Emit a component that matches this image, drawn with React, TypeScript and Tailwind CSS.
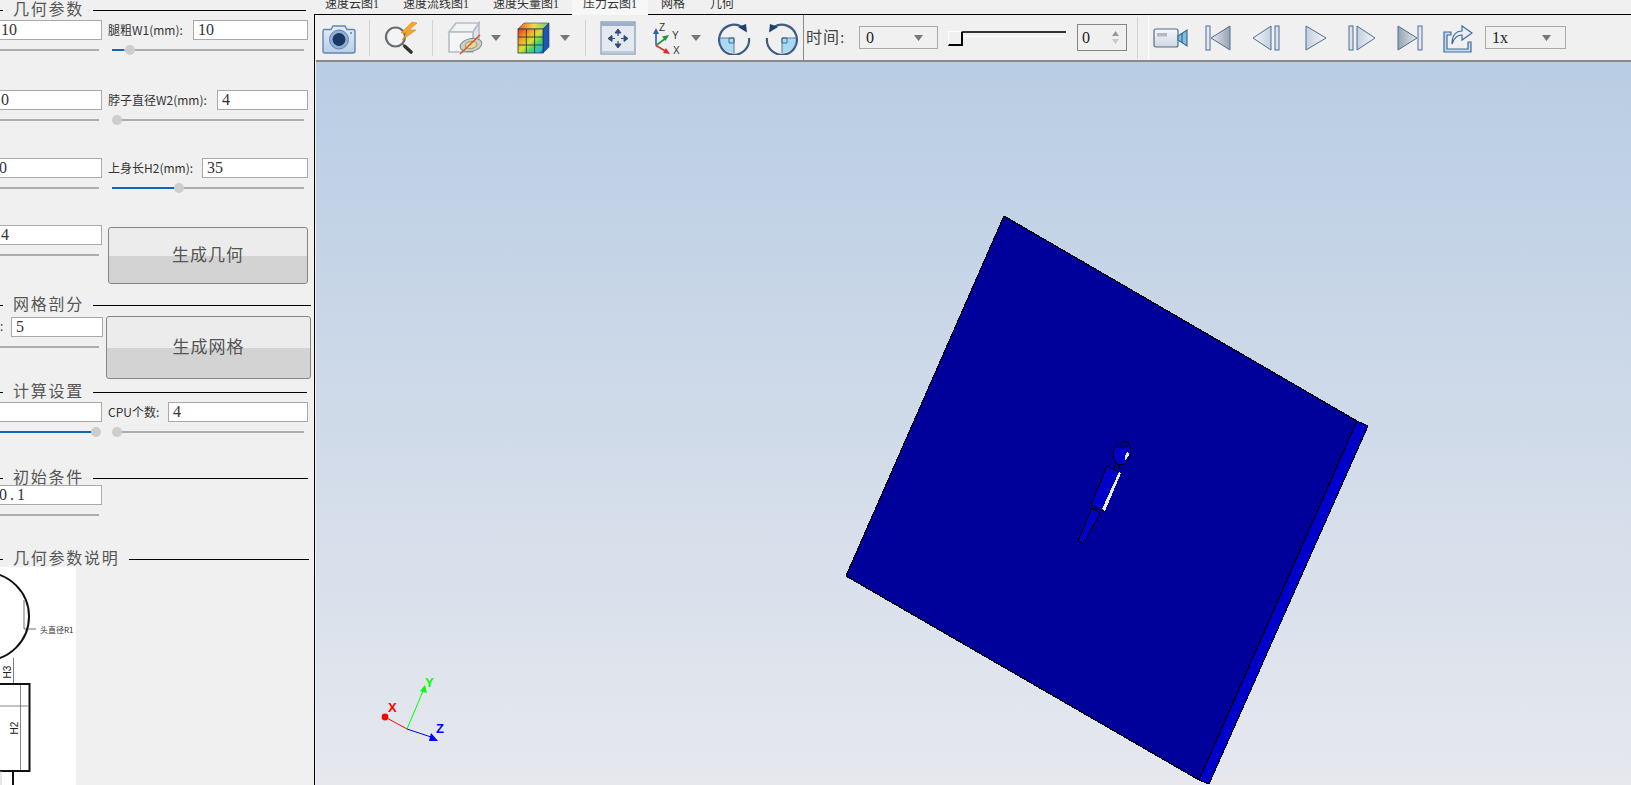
import React from "react";

const serif = "font-['Liberation_Serif','Noto_Sans_CJK_SC',serif]";
const sans = "font-['Noto_Sans_CJK_SC','Liberation_Sans',sans-serif]";

function Heading({ text, className }: { text: string; className: string }) {
  return (
    <div className={`flex items-center ${className}`}>
      <div className="w-[3px] h-px bg-black shrink-0" />
      <span className={`ml-[10px] mr-[9px] shrink-0 text-[16px] leading-none tracking-[1.75px] text-[#555] ${serif}`}>{text}</span>
      <div className="flex-1 h-px bg-black" />
    </div>
  );
}

function Value({ value, className = "" }: { value: string; className?: string }) {
  return (
    <input
      readOnly
      value={value}
      className={`block h-5 min-w-0 border border-[#a9a9a9] bg-white text-[16px] leading-none text-[#333] outline-none ${serif} ${className}`}
    />
  );
}

function Track({ fill = "", thumb = "", className = "" }: { fill?: string; thumb?: string; className?: string }) {
  return (
    <div className={`relative mt-1 h-3 flex items-center ${className}`}>
      <div className="w-full h-0.5 bg-[#adadad]" />
      {fill && <div className={`absolute left-0 h-0.5 bg-[#0f67b8] ${fill}`} />}
      {thumb && <div className={`absolute top-[1px] w-[10px] h-[10px] rounded-full bg-[#cdcdcd] ${thumb}`} />}
    </div>
  );
}

function LeftCell({ value, pad }: { value: string; pad: string }) {
  return (
    <div className="min-w-0">
      <Value value={value} className={`w-[122px] -ml-5 ${pad}`} />
      <Track className="w-[99px]" />
    </div>
  );
}

function RightCell({ label, labelW, value, fill, thumb }: { label: string; labelW: string; value: string; fill?: string; thumb: string }) {
  return (
    <div>
      <div className="flex items-center">
        <span className={`shrink-0 whitespace-nowrap text-[12px] leading-none text-[#333] ${sans} ${labelW}`}>{label}</span>
        <Value value={value} className="flex-1 w-full pl-[4px]" />
      </div>
      <Track fill={fill} thumb={thumb} className="mx-1" />
    </div>
  );
}

function GenButton({ text, className }: { text: string; className: string }) {
  return (
    <button className={`flex items-center justify-center border border-[#858585] rounded-[3px] bg-linear-to-b from-[#ececec] from-50% to-[#d3d3d3] to-50% text-[17px] tracking-[1px] text-[#555] ${serif} ${className}`}>
      {text}
    </button>
  );
}

function Diagram() {
  return (
    <svg width="76" height="218" viewBox="0 0 76 218" className="block">
      <circle cx="-15" cy="49.5" r="44" fill="none" stroke="#111" strokeWidth="2" />
      <path d="M24 33V62M24 62H36" stroke="#333" strokeWidth="0.7" fill="none" />
      <text x="40" y="66" fontSize="8" fill="#333" fontFamily="Noto Sans CJK SC, sans-serif">头直径R1</text>
      <path d="M13.5 91V117" stroke="#444" strokeWidth="0.7" />
      <text transform="translate(11 105) rotate(-90)" fontSize="10" fill="#222" fontFamily="Liberation Sans, sans-serif" textAnchor="middle">H3</text>
      <rect x="-6" y="117" width="35.5" height="87" fill="none" stroke="#111" strokeWidth="2" />
      <path d="M20.5 118V203M0 139H28" stroke="#555" strokeWidth="0.7" fill="none" />
      <text transform="translate(18 161) rotate(-90)" fontSize="10" fill="#222" fontFamily="Liberation Sans, sans-serif" textAnchor="middle">H2</text>
      <path d="M13 204V218" stroke="#111" strokeWidth="2" />
      <path d="M1 204V218" stroke="#bbb" strokeWidth="0.7" />
    </svg>
  );
}

function LeftPanel() {
  return (
    <div className="w-[314px] shrink-0 h-full overflow-hidden bg-[#f0f0f0]">
      <Heading text="几何参数" className="h-5 pr-2" />
      <div className="grid grid-cols-[102px_200px] gap-x-[6px] h-[70px]">
        <LeftCell value="10" pad="pl-[20px]" />
        <RightCell label="腿粗W1(mm):" labelW="w-[85px]" value="10" fill="w-[12px]" thumb="left-[13px]" />
      </div>
      <div className="grid grid-cols-[102px_200px] gap-x-[6px] h-[68px]">
        <LeftCell value="10" pad="pl-[12px]" />
        <RightCell label="脖子直径W2(mm):" labelW="w-[109px]" value="4" thumb="left-0" />
      </div>
      <div className="grid grid-cols-[102px_200px] gap-x-[6px] h-[67px]">
        <LeftCell value="10" pad="pl-[10px]" />
        <RightCell label="上身长H2(mm):" labelW="w-[94px]" value="35" fill="w-[65px]" thumb="left-[62px]" />
      </div>
      <div className="grid grid-cols-[102px_200px] gap-x-[6px] h-[70px]">
        <LeftCell value="4" pad="pl-[20px]" />
        <GenButton text="生成几何" className="mt-[2px] h-[57px]" />
      </div>
      <Heading text="网格剖分" className="h-5 pr-[3px]" />
      <div className="flex h-[67px]">
        <div className="w-[103px] shrink-0 pt-[2px]">
          <div className="flex items-center">
            <span className="w-[11px] text-[12px] leading-none text-[#333]">:</span>
            <Value value="5" className="w-[92px] pl-[4px]" />
          </div>
          <Track className="w-[99px]" />
        </div>
        <GenButton text="生成网格" className="ml-[3px] mt-[1px] w-[205px] h-[63px]" />
      </div>
      <Heading text="计算设置" className="h-5 pr-[7px]" />
      <div className="grid grid-cols-[102px_200px] gap-x-[6px] h-[66px]">
        <div>
          <Value value="" className="w-[122px] -ml-5" />
          <div className="relative mt-1 h-3 flex items-center w-[99px]">
            <div className="w-full h-0.5 bg-[#0f67b8]" />
            <div className="absolute left-[91px] top-[1px] w-[10px] h-[10px] rounded-full bg-[#cdcdcd]" />
          </div>
        </div>
        <RightCell label="CPU个数:" labelW="w-[60px]" value="4" thumb="left-0" />
      </div>
      <Heading text="初始条件" className="h-[17px] pr-[6px] pt-[3px]" />
      <div className="h-[64px]">
        <Value value="0.1" className="w-[122px] -ml-5 pl-[18px] tracking-[3px]" />
        <Track className="w-[99px]" />
      </div>
      <Heading text="几何参数说明" className="h-[18px] pr-[5px] pt-[2px]" />
      <div className="w-[76px] h-[218px] bg-white overflow-hidden">
        <Diagram />
      </div>
    </div>
  );
}

function Sep({ className = "" }: { className?: string }) {
  return <div className={`w-px h-[36px] bg-[#d4d4d4] shrink-0 ${className}`} />;
}

function Caret({ className = "" }: { className?: string }) {
  return (
    <svg width="12" height="8" viewBox="0 0 12 8" className={`shrink-0 ${className}`}>
      <path d="M1 1H11L6 7Z" fill="#777" />
    </svg>
  );
}

function CameraIcon() {
  return (
    <svg width="34" height="32" viewBox="0 0 34 32" className="shrink-0 ml-[6px]">
      <defs>
        <linearGradient id="cam" x1="0" y1="0" x2="0" y2="1">
          <stop offset="0" stopColor="#e4eef9" />
          <stop offset="1" stopColor="#b6cfe8" />
        </linearGradient>
      </defs>
      <path d="M2 7.5H9L11 4H23L25 7.5H31Q33 7.5 33 9.5V29Q33 31 31 31H3Q1 31 1 29V9.5Q1 7.5 2 7.5Z" fill="url(#cam)" stroke="#6384ae" strokeWidth="1.4" />
      <circle cx="17" cy="17.5" r="9.5" fill="#8fb0d3" stroke="#6384ae" />
      <circle cx="17" cy="17.5" r="6.5" fill="#1a3766" />
      <circle cx="29" cy="11" r="1" fill="#5a7ba6" />
    </svg>
  );
}

function SearchBoltIcon() {
  return (
    <svg width="36" height="34" viewBox="0 0 36 34" className="shrink-0 ml-[14px]">
      <circle cx="11.5" cy="16" r="9.5" fill="#f2f5f8" stroke="#6b6b6b" strokeWidth="2.2" />
      <path d="M18.5 23L21 25.5" stroke="#777" strokeWidth="2" />
      <path d="M21 25.5L27 31" stroke="#333" strokeWidth="3.6" strokeLinecap="round" />
      <path d="M28 1L17 12H23L18 19L32 9H25L33 2Z" fill="#f3a62a" stroke="#d88a18" strokeWidth="0.6" />
    </svg>
  );
}

function BoxSliceIcon() {
  return (
    <svg width="36" height="34" viewBox="0 0 36 34" className="shrink-0 ml-[14px]">
      <path d="M2 11L9 2H32L26 11Z" fill="#f2f3f5" stroke="#b4bcc8" strokeWidth="1.6" />
      <path d="M26 11L32 2V22L26 30Z" fill="#dfe3e9" stroke="#b4bcc8" strokeWidth="1.6" />
      <path d="M2 11H26V31H2Z" fill="#f5f5f6" stroke="#b4bcc8" strokeWidth="1.6" />
      <ellipse cx="24" cy="24" rx="11" ry="6.5" transform="rotate(-12 24 24)" fill="#c9d3c4" stroke="#7a8c98" />
      <ellipse cx="24" cy="24" rx="6" ry="3.5" transform="rotate(-12 24 24)" fill="#e6d79a" stroke="#a79a66" />
      <path d="M13 33L33 14" stroke="#d9522a" strokeWidth="1.4" />
    </svg>
  );
}

function ColorCubeIcon() {
  return (
    <svg width="35" height="34" viewBox="0 0 35 34" className="shrink-0 ml-[14px]">
      <defs>
        <linearGradient id="rainbow" x1="0" y1="0" x2="1" y2="1">
          <stop offset="0" stopColor="#e0312c" />
          <stop offset="0.3" stopColor="#f3a51f" />
          <stop offset="0.5" stopColor="#d8e22e" />
          <stop offset="0.7" stopColor="#43d26c" />
          <stop offset="0.88" stopColor="#2fb8dc" />
          <stop offset="1" stopColor="#1e5fc0" />
        </linearGradient>
        <linearGradient id="rainbowTop" x1="0" y1="0" x2="1" y2="0">
          <stop offset="0" stopColor="#e85a34" />
          <stop offset="0.5" stopColor="#eede40" />
          <stop offset="1" stopColor="#63cf66" />
        </linearGradient>
      </defs>
      <path d="M2 8L8 2H33L27 8Z" fill="url(#rainbowTop)" stroke="#33465e" strokeWidth="0.6" />
      <path d="M27 8L33 2V26L27 32Z" fill="#1e57b5" stroke="#1c3560" strokeWidth="0.6" />
      <rect x="2" y="8" width="25" height="24" fill="url(#rainbow)" stroke="#26384e" strokeWidth="0.8" />
      <path d="M10.3 8V32M18.6 8V32M2 16H27M2 24H27" stroke="#26384e" strokeWidth="0.9" fill="none" />
    </svg>
  );
}

function PanIcon() {
  return (
    <svg width="36" height="34" viewBox="0 0 36 34" className="shrink-0 ml-[14px]">
      <rect x="1" y="1" width="34" height="32" fill="#e4e9ef" stroke="#8296b0" strokeWidth="1.2" />
      <rect x="1.6" y="1.6" width="32.8" height="3.4" fill="#9db0c7" />
      <rect x="1.6" y="30" width="32.8" height="2.4" fill="#bccad9" />
      <g fill="#2c4e78" stroke="#2c4e78">
        <path d="M18 11V15M18 20V24M11 17.5H15M21 17.5H25" strokeWidth="1.2" fill="none" />
        <path d="M18 8L15 12H21Z" />
        <path d="M18 27L15 23H21Z" />
        <path d="M8 17.5L12 14.5V20.5Z" />
        <path d="M28 17.5L24 14.5V20.5Z" />
      </g>
    </svg>
  );
}

function AxesIcon() {
  return (
    <svg width="30" height="34" viewBox="0 0 30 34" className="shrink-0 ml-4">
      <path d="M4 24.5V11" stroke="#2d5fb4" strokeWidth="1.6" />
      <path d="M4 7L1 13H7Z" fill="#2d5fb4" />
      <path d="M4 24.5L14 17" stroke="#2b9348" strokeWidth="1.6" />
      <path d="M17 14L10 15.5L13.5 20Z" fill="#2b9348" />
      <path d="M4 24.5L15 31" stroke="#e02c2c" strokeWidth="1.6" />
      <path d="M18 33L11 32L14 27Z" fill="#e02c2c" />
      <text x="7" y="10" fontSize="10" fill="#333" fontFamily="Liberation Sans, sans-serif">Z</text>
      <text x="20" y="18" fontSize="10" fill="#333" fontFamily="Liberation Sans, sans-serif">Y</text>
      <text x="21" y="33" fontSize="10" fill="#333" fontFamily="Liberation Sans, sans-serif">X</text>
    </svg>
  );
}

function RotateIcon({ flip, className }: { flip?: boolean; className: string }) {
  return (
    <svg width="34" height="34" viewBox="0 0 34 34" className={`shrink-0 ${className}`}>
      <g transform={flip ? "translate(34 0) scale(-1 1)" : undefined}>
        <path d="M2 17H17V32A15 15 0 0 1 2 17Z" fill="#a8daf3" />
        <path d="M12 17H17V22H12Z" fill="none" stroke="#3c6e96" strokeWidth="1" />
        <path d="M25 6A15 15 0 1 0 32 17" fill="none" stroke="#3f5d80" strokeWidth="2.2" />
        <path d="M2 17H17V32" fill="none" stroke="#3f5d80" strokeWidth="0.8" />
        <path d="M30 11.5L29 3L21 6Z" fill="#1f3f6e" />
      </g>
    </svg>
  );
}

function VideoIcon() {
  return (
    <svg width="35" height="24" viewBox="0 0 35 24" className="shrink-0 ml-1">
      <defs>
        <linearGradient id="vid" x1="0" y1="0" x2="0" y2="1">
          <stop offset="0" stopColor="#f5f7fa" />
          <stop offset="1" stopColor="#cfd8e3" />
        </linearGradient>
      </defs>
      <rect x="1" y="3" width="24" height="18" rx="2" fill="url(#vid)" stroke="#586d84" strokeWidth="1.2" />
      <rect x="4" y="7" width="10" height="3.5" fill="#b4b9bf" />
      <path d="M25 10L34 4V20L25 14Z" fill="#7fc0de" stroke="#3f6d94" strokeWidth="1.2" />
      <path d="M29 7V17" stroke="#27567f" strokeWidth="1" />
    </svg>
  );
}

const navStroke = "#506d92";

function FirstIcon() {
  return (
    <svg width="26" height="26" viewBox="0 0 26 26" className="shrink-0 ml-[17px]">
      <defs>
        <linearGradient id="nav1" x1="0" y1="0" x2="1" y2="0">
          <stop offset="0" stopColor="#e4e9ef" />
          <stop offset="1" stopColor="#97a3b1" />
        </linearGradient>
      </defs>
      <rect x="1" y="1" width="4" height="24" fill="#e3eaf3" stroke={navStroke} />
      <path d="M25 1V25L6 13Z" fill="url(#nav1)" stroke={navStroke} />
    </svg>
  );
}

function PrevIcon() {
  return (
    <svg width="28" height="26" viewBox="0 0 28 26" className="shrink-0 ml-[21px]">
      <defs>
        <linearGradient id="nav2" x1="0" y1="0" x2="1" y2="0">
          <stop offset="0" stopColor="#f5f7fa" />
          <stop offset="1" stopColor="#c2cfdf" />
        </linearGradient>
      </defs>
      <path d="M19 1V25L1 13Z" fill="url(#nav2)" stroke={navStroke} />
      <rect x="23" y="1" width="4" height="24" fill="#d9e2ed" stroke={navStroke} />
    </svg>
  );
}

function PlayIcon() {
  return (
    <svg width="22" height="26" viewBox="0 0 22 26" className="shrink-0 ml-[25px]">
      <defs>
        <linearGradient id="nav3" x1="0" y1="0" x2="1" y2="0">
          <stop offset="0" stopColor="#c2cfdf" />
          <stop offset="1" stopColor="#f5f7fa" />
        </linearGradient>
      </defs>
      <path d="M1 1V25L21 13Z" fill="url(#nav3)" stroke={navStroke} />
    </svg>
  );
}

function NextIcon() {
  return (
    <svg width="28" height="26" viewBox="0 0 28 26" className="shrink-0 ml-[21px]">
      <rect x="1" y="1" width="4" height="24" fill="#d9e2ed" stroke={navStroke} />
      <path d="M9 1V25L27 13Z" fill="url(#nav3)" stroke={navStroke} />
    </svg>
  );
}

function LastIcon() {
  return (
    <svg width="26" height="26" viewBox="0 0 26 26" className="shrink-0 ml-[21px]">
      <defs>
        <linearGradient id="nav4" x1="0" y1="0" x2="1" y2="0">
          <stop offset="0" stopColor="#97a3b1" />
          <stop offset="1" stopColor="#e4e9ef" />
        </linearGradient>
      </defs>
      <path d="M1 1V25L20 13Z" fill="url(#nav4)" stroke={navStroke} />
      <rect x="21" y="1" width="4" height="24" fill="#e3eaf3" stroke={navStroke} />
    </svg>
  );
}

function ShareIcon() {
  return (
    <svg width="32" height="30" viewBox="0 0 32 30" className="shrink-0 ml-[19px]">
      <path d="M2 9H9V12H5V26H26V19H29V29H2Z" fill="#c4d9ec" stroke="#3f6d9a" strokeWidth="1.2" />
      <path d="M10 21C10 12 14 8 20 8V3L30 10L20 17V12C15 12 12 15 10 21Z" fill="#e8f0f8" stroke="#3f6d9a" strokeWidth="1.2" />
    </svg>
  );
}

function Select({ value, className }: { value: string; className: string }) {
  return (
    <div className={`h-[23px] flex items-center justify-between border border-[#a9a9a9] pl-[6px] pr-[14px] text-[16px] text-[#222] ${serif} ${className}`}>
      <span>{value}</span>
      <svg width="9" height="6" viewBox="0 0 9 6">
        <path d="M0 0H9L4.5 6Z" fill="#777" />
      </svg>
    </div>
  );
}

function Toolbar() {
  return (
    <div className="h-[45px] shrink-0 flex items-center bg-[#f0f0f0] border-b-2 border-[#8a8a8a] box-content">
      <CameraIcon />
      <Sep className="ml-[13px]" />
      <SearchBoltIcon />
      <Sep className="ml-3" />
      <BoxSliceIcon />
      <Caret className="ml-[7px]" />
      <ColorCubeIcon />
      <Caret className="ml-2" />
      <Sep className="ml-[14px]" />
      <PanIcon />
      <AxesIcon />
      <Caret className="ml-2" />
      <RotateIcon className="ml-[15px]" />
      <RotateIcon flip className="ml-[14px]" />
      <div className="w-px h-[45px] bg-[#8a8a8a] shrink-0 ml-1" />
      <span className={`w-[44px] ml-[2px] shrink-0 text-[16px] tracking-[1px] text-[#444] whitespace-nowrap ${serif}`}>时间:</span>
      <Select value="0" className="ml-[9px] w-[79px] shrink-0" />
      <div className="ml-[10px] w-[118px] mr-[2px] mt-px shrink-0 flex items-start">
        <div className="w-[15px] h-[15px] border-r-2 border-b-2 border-black border-t border-l border-t-white border-l-white" />
        <div className="flex-1 border-t-2 border-[#333] border-b border-b-white h-[3px] box-content" />
      </div>
      <div className={`ml-[9px] w-[50px] h-[27px] shrink-0 flex items-center justify-between border border-[#858585] pl-[4px] pr-[7px] text-[16px] text-[#222] ${serif}`}>
        <span>0</span>
        <div className="flex flex-col gap-[3px]">
          <svg width="7" height="5" viewBox="0 0 7 5"><path d="M3.5 0L7 5H0Z" fill="#999" /></svg>
          <svg width="7" height="5" viewBox="0 0 7 5"><path d="M0 0H7L3.5 5Z" fill="#c8c8c8" /></svg>
        </div>
      </div>
      <Sep className="ml-[10px] h-[42px] bg-[#bdbdbd]" />
      <div className="ml-[10px] w-px h-[45px] bg-white shrink-0" />
      <VideoIcon />
      <FirstIcon />
      <PrevIcon />
      <PlayIcon />
      <NextIcon />
      <LastIcon />
      <ShareIcon />
      <Select value="1x" className="ml-[11px] w-[81px] shrink-0" />
    </div>
  );
}

function Scene() {
  return (
    <svg className="block w-full h-full" viewBox="316 62 1315 723" preserveAspectRatio="xMinYMin slice">
      {/* model box */}
      <g shapeRendering="crispEdges">
        <path d="M1357 421L1368 426L1209 784L1199 780Z" fill="#0000cd" stroke="#000" strokeWidth="1" />
        <path d="M1004 216L1357 421L1199 780L846 576Z" fill="#00009a" stroke="#000" strokeWidth="1.2" />
        {/* stick figure cut out of the box */}
        <ellipse cx="1122" cy="453" rx="8.5" ry="12" transform="rotate(14 1122 453)" fill="#0000c8" stroke="#000" />
        <path d="M1115 443Q1122 439 1129 444L1127 449L1114 447Z" fill="#000080" />
        <path d="M1128 451L1129 455L1125 461L1125 456Z" fill="#e8ecf5" />
        <path d="M1115 465L1114 468M1120 465L1118 469" stroke="#000" />
        <path d="M1107 466L1121 473L1103 511L1091 505Z" fill="#0000c8" stroke="#000" />
        <path d="M1119 472L1121 473L1105 511L1102 509Z" fill="#e8ecf5" />
        <path d="M1092 508L1100 513L1084 544L1078 541Z" fill="#0000c8" stroke="#000" />
      </g>
      {/* axis triad */}
      <path d="M407 729L385 717" stroke="#ff0000" strokeWidth="1" />
      <circle cx="385" cy="717" r="3.4" fill="#ff0000" />
      <text x="388" y="712" fontSize="13" fontWeight="700" fill="#ff0000" fontFamily="Liberation Sans, sans-serif">X</text>
      <path d="M407 729L423 691" stroke="#00ff00" strokeWidth="1" />
      <path d="M425 685L420 691L427 693Z" fill="#00ff00" />
      <text x="425" y="687" fontSize="13" fontWeight="700" fill="#00ff00" fontFamily="Liberation Sans, sans-serif">Y</text>
      <path d="M407 729L431 737" stroke="#0000ff" strokeWidth="1" />
      <path d="M431 733L438 741L429 741Z" fill="#0000ff" />
      <text x="436" y="733" fontSize="13" fontWeight="700" fill="#0000ff" fontFamily="Liberation Sans, sans-serif">Z</text>
    </svg>
  );
}

const tabs = [
  { name: "速度云图1", cls: "-ml-px" },
  { name: "速度流线图1", cls: "" },
  { name: "速度矢量图1", cls: "" },
  { name: "压力云图1", active: true, cls: "ml-px" },
  { name: "网格", cls: "ml-px" },
  { name: "几何", cls: "ml-px" },
];

export default function App() {
  return (
    <div className="w-full h-screen flex overflow-hidden bg-[#f0f0f0]">
      <LeftPanel />
      <div className="flex-1 min-w-0 h-full flex flex-col">
        <div className="h-[14px] shrink-0 flex bg-[#f0f0f0] relative z-10">
          {tabs.map((t) => (
            <div
              key={t.name}
              className={
                t.active
                  ? `h-[15px] w-[76px] shrink-0 overflow-hidden bg-[#f7f7f7] text-center text-[12px] leading-[11px] text-[#333] ${serif} ${t.cls}`
                  : `h-[14px] shrink-0 overflow-hidden px-3 text-[12px] leading-[11px] text-[#333] ${serif} ${t.cls}`
              }
            >
              <span className="block -mt-[1px] whitespace-nowrap">{t.name}</span>
            </div>
          ))}
        </div>
        <div className="flex-1 min-h-0 flex flex-col border-l border-t border-black pl-px">
          <Toolbar />
          <div className="flex-1 min-h-0 bg-linear-to-b from-[#b9cde4] to-[#e6e8ee]">
            <Scene />
          </div>
        </div>
      </div>
    </div>
  );
}
